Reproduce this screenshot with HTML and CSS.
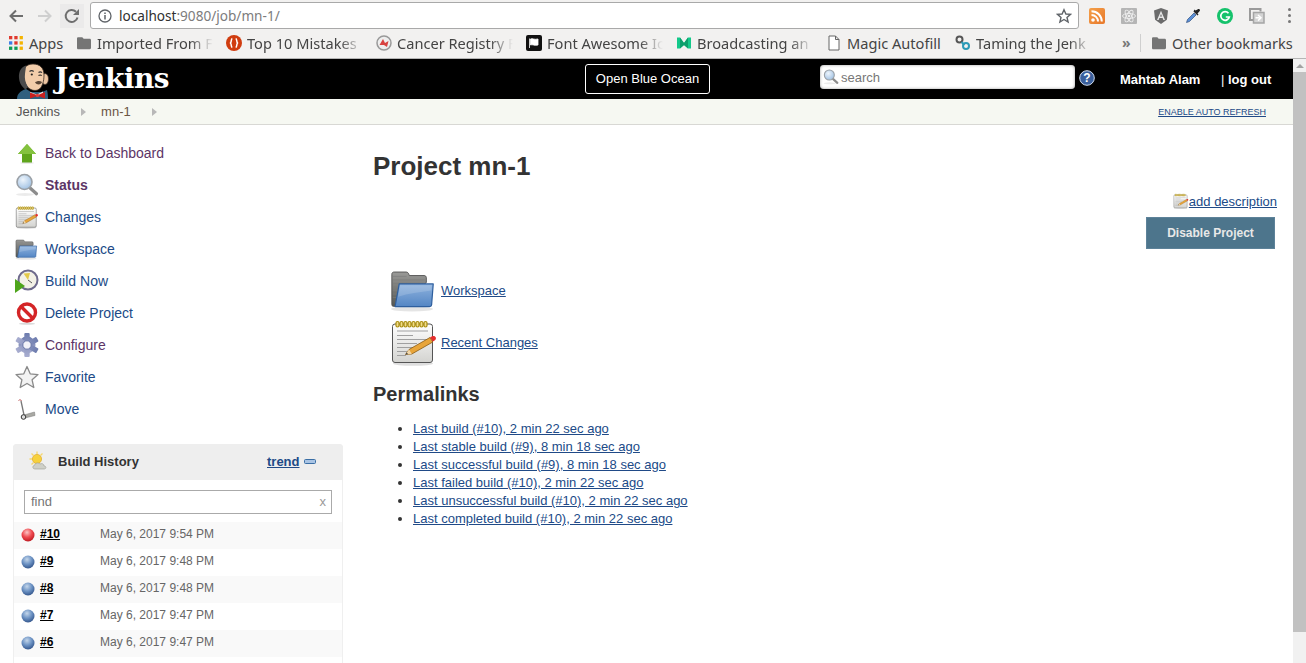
FILE: index.html
```html
<!DOCTYPE html>
<html lang="en">
<head>
<meta charset="utf-8">
<title>mn-1 [Jenkins]</title>
<link rel="stylesheet" href="styles.css">
</head>
<body>
<svg class="defs" width="0" height="0" aria-hidden="true">
  <defs>
    <linearGradient id="folderBlue" x1="0" y1="0" x2="0" y2="1"><stop offset="0" stop-color="#8fb3de"/><stop offset="1" stop-color="#5486c4"/></linearGradient>
    <linearGradient id="folderGrey" x1="0" y1="0" x2="0" y2="1"><stop offset="0" stop-color="#9a9a98"/><stop offset="1" stop-color="#555753"/></linearGradient>
    <linearGradient id="paper" x1="0" y1="0" x2="0" y2="1"><stop offset="0" stop-color="#fff"/><stop offset="1" stop-color="#d3d3d0"/></linearGradient>
    <linearGradient id="rssFill" x1="0" y1="0" x2="1" y2="1"><stop offset="0" stop-color="#f4a04a"/><stop offset="1" stop-color="#e8782a"/></linearGradient>
    <linearGradient id="gearFill" x1="0" y1="0" x2="0" y2="1"><stop offset="0" stop-color="#6d7cae"/><stop offset="1" stop-color="#a9aed0"/></linearGradient>
    <radialGradient id="ballBlue" cx=".42" cy=".3" r=".75"><stop offset="0" stop-color="#c4d6ea"/><stop offset=".5" stop-color="#6d93c4"/><stop offset="1" stop-color="#2d4f86"/></radialGradient>
    <radialGradient id="ballRed" cx=".42" cy=".3" r=".75"><stop offset="0" stop-color="#fbc5c5"/><stop offset=".5" stop-color="#ef4a50"/><stop offset="1" stop-color="#b8141c"/></radialGradient>
    <radialGradient id="glass" cx=".4" cy=".35" r=".7"><stop offset="0" stop-color="#eef5fc"/><stop offset="1" stop-color="#9dbfe2"/></radialGradient>
    <symbol id="i-folder" viewBox="0 0 48 48">
      <ellipse cx="22" cy="43" rx="21" ry="2.500" fill="#000" opacity=".1"/>
      <g transform="translate(0 2.500) scale(.92 .88)">
        <path d="M2 6.500C2 5 3 4 4.500 4h13c1.500 0 2.500 1 3 2.500l.5 1.500h16c1.500 0 2.500 1 2.500 2.500V16L8 43H3.500C2.500 43 2 42 2 41z" fill="url(#folderGrey)" stroke="#505050"/>
        <path d="M3 9h15M3 13h35M3 17h33M3 21h30M3 25h27M3 29h24M3 33h20" stroke="#7c7c7a" stroke-width=".7" fill="none"/>
        <path d="M10 17.500h37l-1.800 24c-.1 1.200-1 1.800-2.200 1.800H5.500z" fill="url(#folderBlue)" stroke="#2e5f9e" stroke-width="1.300" stroke-linejoin="round"/>
        <path d="M11 19h34.500l-.5 6C32 27 20 28 8.800 32z" fill="#fff" opacity=".16"/>
      </g>
    </symbol>
    <symbol id="i-notes" viewBox="0 0 48 48">
      <ellipse cx="23" cy="45.500" rx="20" ry="2.300" fill="#000" opacity=".13"/>
      <rect x="2.500" y="6" width="40" height="38.500" rx="2.500" fill="url(#paper)" stroke="#555"/>
      <g fill="#f0dc8a" stroke="#a98c0c" stroke-width="1.200"><rect x="6" y="3.500" width="3" height="5.500" rx="1.500"/><rect x="10" y="3.500" width="3" height="5.500" rx="1.500"/><rect x="14" y="3.500" width="3" height="5.500" rx="1.500"/><rect x="18" y="3.500" width="3" height="5.500" rx="1.500"/><rect x="22" y="3.500" width="3" height="5.500" rx="1.500"/><rect x="26" y="3.500" width="3" height="5.500" rx="1.500"/><rect x="30" y="3.500" width="3" height="5.500" rx="1.500"/><rect x="34" y="3.500" width="3" height="5.500" rx="1.500"/></g>
      <path d="M7 13h31M7 17.500h16M7 21.500h31M7 25.500h20M7 29.500h16M7 33.500h10M7 37.500h9" stroke="#a0a0a0" stroke-width="1" fill="none"/>
      <path d="M15.500 36.500l3.500-5 21-12 2.800 4.500-21 12z" fill="#e8a53a" stroke="#8a5a12" stroke-width=".8"/>
      <path d="M15.500 36.500l3.500-5 2.800 4.500z" fill="#f0d6a8"/>
      <path d="M15.500 36.500l1.300-1.900 1.200 1.700z" fill="#333"/>
      <path d="M40 19.500l2-1.200c1.800-.8 3.300-.2 3.800 1.300.4 1.500-.2 2.700-2 3.500l-1 .4z" fill="#e52f2f"/>
    </symbol>
    <symbol id="i-search" viewBox="0 0 24 24">
      <ellipse cx="10" cy="21.500" rx="9" ry="1.500" fill="#000" opacity=".08"/>
      <path d="M14.500 14.500l7 6.300" stroke="#8c8c8c" stroke-width="3.200" stroke-linecap="round"/>
      <circle cx="9.500" cy="9" r="7.500" fill="url(#glass)" stroke="#9aa0a6" stroke-width="1.600"/>
    </symbol>
  </defs>
</svg>

<header class="browser">
  <div class="toolbar">
    <svg class="nav" width="16" height="16" viewBox="0 0 16 16"><path d="M15 8H3M8 2.500L2.500 8 8 13.500" fill="none" stroke="#6e6e6e" stroke-width="2"/></svg>
    <svg class="nav" width="16" height="16" viewBox="0 0 16 16"><path d="M1 8h12M8 2.500L13.500 8 8 13.500" fill="none" stroke="#cfcfcf" stroke-width="2"/></svg>
    <span class="reload"><svg width="16" height="16" viewBox="0 0 16 16"><path d="M13.500 9.500A6 6 0 1 1 12 3.800" fill="none" stroke="#6e6e6e" stroke-width="2"/><path d="M15 1v6H9z" fill="#6e6e6e"/></svg></span>
    <div class="omnibox">
      <svg width="14" height="14" viewBox="0 0 14 14"><circle cx="7" cy="7" r="6" fill="none" stroke="#5f6368" stroke-width="1.300"/><path d="M7 6v4.500M7 3.500V5" stroke="#5f6368" stroke-width="1.500"/></svg>
      <span class="url"><span class="host">localhost</span>:9080/job/mn-1/</span>
      <svg class="star" width="16" height="16" viewBox="0 0 16 16"><path d="M8 1.700l1.900 4.300 4.600.4-3.500 3 1.100 4.600L8 11.500 3.900 14l1.100-4.600-3.500-3 4.600-.4z" fill="none" stroke="#5f6368" stroke-width="1.400"/></svg>
    </div>
    <div class="extensions">
      <svg width="16" height="16" viewBox="0 0 16 16"><rect width="16" height="16" rx="2" fill="url(#rssFill)"/><circle cx="4" cy="12" r="1.800" fill="#fff"/><path d="M2.500 7a6.500 6.500 0 0 1 6.500 6.500M2.500 3.200a10.300 10.300 0 0 1 10.300 10.300" fill="none" stroke="#fff" stroke-width="2"/></svg>
      <svg width="16" height="16" viewBox="0 0 16 16"><rect width="16" height="16" rx="1" fill="#b5b5b5"/><g fill="none" stroke="#eee" stroke-width=".9"><ellipse cx="8" cy="8" rx="6.500" ry="2.500"/><ellipse cx="8" cy="8" rx="6.500" ry="2.500" transform="rotate(60 8 8)"/><ellipse cx="8" cy="8" rx="6.500" ry="2.500" transform="rotate(120 8 8)"/></g><circle cx="8" cy="8" r="1.300" fill="#eee"/></svg>
      <svg width="16" height="16" viewBox="0 0 16 16"><path d="M8 0L1 2.500l1.100 9.300L8 16l5.900-4.200L15 2.500z" fill="#6b6b6b"/><path d="M8 2.700L4 12h1.600l.8-2h3.200l.8 2H12zM7 8.600l1-2.500 1 2.500z" fill="#e6e6e6"/></svg>
      <svg width="16" height="16" viewBox="0 0 16 16"><path d="M1.500 14.500l1-3L9 5l2 2-6.500 6.500z" fill="#5b8fd6" stroke="#33527f" stroke-width=".7"/><path d="M8.500 3.500l4 4 1-1-1-1 2-2.200c.7-.8.600-1.500 0-2s-1.300-.6-2 .1L10.500 2.500l-1-1z" fill="#222"/></svg>
      <svg width="16" height="16" viewBox="0 0 16 16"><circle cx="8" cy="8" r="8" fill="#15c26b"/><path d="M11.500 5.300A4.300 4.300 0 1 0 12.300 9H8.800" fill="none" stroke="#fff" stroke-width="1.700"/></svg>
      <svg width="16" height="16" viewBox="0 0 16 16"><path d="M11.500 3.500V1H1v11h3" fill="none" stroke="#9a9a9a" stroke-width="2"/><rect x="4.500" y="4.500" width="10.500" height="10.500" fill="#d4d4d4" stroke="#a5a5a5" stroke-width="1.500"/><path d="M6.500 9.800h4M9 7l3 2.800L9 12.600" fill="none" stroke="#fff" stroke-width="1.500"/></svg>
      <span class="dots"><i></i><i></i><i></i></span>
    </div>
  </div>
  <nav class="bookmarks">
    <a class="bm bm-apps"><svg width="14" height="14" viewBox="0 0 14 14"><g fill="#e0392e"><rect width="3.300" height="3.300"/><rect x="5.300" width="3.300" height="3.300"/></g><rect x="10.600" width="3.300" height="3.300" fill="#f4b400"/><rect y="5.300" width="3.300" height="3.300" fill="#3d7de6"/><rect x="5.300" y="5.300" width="3.300" height="3.300" fill="#e0392e"/><rect x="10.600" y="5.300" width="3.300" height="3.300" fill="#f4b400"/><rect y="10.600" width="3.300" height="3.300" fill="#0f9d58"/><rect x="5.300" y="10.600" width="3.300" height="3.300" fill="#0f9d58"/><rect x="10.600" y="10.600" width="3.300" height="3.300" fill="#f4b400"/></svg><span>Apps</span></a>
    <a class="bm bm-import"><svg width="14" height="14" viewBox="0 0 14 14"><path d="M0 2.500C0 1.700.6 1.200 1.300 1.200h4l1.400 1.600h6c.7 0 1.300.6 1.300 1.300v8c0 .7-.6 1.200-1.300 1.200H1.300C.6 13.300 0 12.800 0 12z" fill="#757575"/></svg><span class="fade">Imported From F</span></a>
    <a class="bm bm-std"><svg width="16" height="16" viewBox="0 0 16 16"><circle cx="8" cy="8" r="8" fill="#d03c0f"/><path d="M6.300 3.500C4.700 4 5.800 6.500 4.500 8c1.300 1.500.2 4 1.800 4.500M9.700 3.500c1.600.5.500 3 1.800 4.500-1.300 1.500-.2 4-1.800 4.500" fill="none" stroke="#fff" stroke-width="1.500"/></svg><span class="fade">Top 10 Mistakes</span></a>
    <a class="bm bm-std"><svg width="16" height="16" viewBox="0 0 16 16"><circle cx="8" cy="8" r="7" fill="#eee" stroke="#999" stroke-width="1.500"/><path d="M3.500 10L7 4l2 4 3.500-2-1.500 6-3-2z" fill="#d8413f"/></svg><span class="fade">Cancer Registry F</span></a>
    <a class="bm bm-std"><svg width="16" height="16" viewBox="0 0 16 16"><rect width="16" height="16" rx="2" fill="#111"/><path d="M3.500 3.500v9.500M4.500 4c2-1 3.500 1 7.500 0v6c-4 1-5.500-1-7.500 0z" fill="#fff" stroke="#fff" stroke-width=".8"/></svg><span class="fade">Font Awesome Ic</span></a>
    <a class="bm bm-std"><svg width="16" height="16" viewBox="0 0 16 16"><path d="M1 2.500h3L8 8l4-5.500h3v11h-3L8 10 4 13.500H1z" fill="#13c98a"/><path d="M4 2.500L8 8v2l-4 3.500zM12 2.500v11L8 10V8z" fill="#0b9e6b"/></svg><span class="fade">Broadcasting an</span></a>
    <a class="bm bm-doc"><svg width="12" height="16" viewBox="0 0 12 16"><path d="M1 1h6.500L11 4.500V15H1zM7.500 1v3.500H11" fill="#fff" stroke="#666"/></svg><span>Magic Autofill</span></a>
    <a class="bm bm-std bm-taming"><svg width="16" height="16" viewBox="0 0 16 16"><circle cx="4.500" cy="4.500" r="3" fill="none" stroke="#555" stroke-width="2"/><path d="M6.500 7l3 3" stroke="#2c9ab7" stroke-width="2"/><circle cx="11" cy="11" r="3" fill="none" stroke="#2c9ab7" stroke-width="2"/></svg><span class="fade">Taming the Jenk</span></a>
    <span class="more">»</span>
    <span class="sep"></span>
    <a class="bm bm-other"><svg width="14" height="14" viewBox="0 0 14 14"><path d="M0 2.500C0 1.700.6 1.200 1.300 1.200h4l1.400 1.600h6c.7 0 1.300.6 1.300 1.300v8c0 .7-.6 1.200-1.300 1.200H1.300C.6 13.300 0 12.800 0 12z" fill="#757575"/></svg><span>Other bookmarks</span></a>
  </nav>
</header>

<div class="viewport">
  <div class="page">
    <header class="jenkins-head">
      <a class="logo">
        <svg width="36" height="40" viewBox="0 0 36 40">
          <path d="M0 40c0-5 3-8 9-10l5 3h11l5-2c.8 3 1 6 1 9z" fill="#2f5f7e"/>
          <ellipse cx="28" cy="20" rx="3.500" ry="5.500" fill="#eec6a2" stroke="#3a2d25" stroke-width=".7"/>
          <path d="M6 16C5 9 10 5 16 5c7 0 11 4 11 11 0 6-1.500 11-4 13.500-2.500 2.500-7 2.500-10 .5C9 27.500 6.500 22 6 16z" fill="#f2cdaa" stroke="#3a2d25" stroke-width=".8"/>
          <path d="M9 6.500C4 8 1.500 13 2 19c.3 5 3 9 6.500 11.500L11 28C8 23 7.500 19 8 15c.3-3 1-6 1-8.500z" fill="#4b4b4b"/>
          <path d="M12.500 12.500c1.200-1 3-1 4.200 0M21.500 13.500c1-.8 2.500-.8 3.500.2" fill="none" stroke="#333" stroke-width="1.100"/>
          <circle cx="14.800" cy="15.500" r="1.100" fill="#222"/>
          <path d="M21.500 16.500c1-.6 2.200-.6 3.200 0" fill="none" stroke="#222" stroke-width="1.100"/>
          <path d="M18 23.500c1.800-1.700 5-2 7-.5-.8 2.800-5 3.400-7 .5z" fill="#5a4636"/>
          <path d="M13 33l7 2.500 6-3v2.500l-6 2-7-2z" fill="#e9e9e4"/>
          <path d="M13 33.500l7.500 2.800L28 33v6.500l-7.500-2.700-7.500 2.700z" fill="#c8201f"/>
          <circle cx="20.500" cy="36.400" r="1.700" fill="#e33b35"/>
        </svg>
        <span class="wordmark">Jenkins</span>
      </a>
      <a class="ocean">Open Blue Ocean</a>
      <div class="search"><svg width="16" height="16"><use href="#i-search"/></svg><span>search</span></div>
      <svg class="help" width="16" height="16" viewBox="0 0 16 16"><circle cx="8" cy="8" r="7.300" fill="#3a5f9c" stroke="#cfdcee" stroke-width="1"/><text x="8" y="12" text-anchor="middle" class="help-q">?</text></svg>
      <span class="user">Mahtab Alam</span>
      <span class="logout"><span class="pipe">|</span> log out</span>
    </header>
    <div class="crumbs">
      <a class="crumb">Jenkins</a><i class="arrow"></i>
      <a class="crumb crumb-job">mn-1</a><i class="arrow"></i>
      <a class="refresh">ENABLE AUTO REFRESH</a>
    </div>
    <div class="layout">
      <aside class="side">
        <ul class="tasks">
          <li><svg width="24" height="24" viewBox="0 0 24 24"><path d="M12 3L3 13h4v8.500h10V13h4z" fill="#5fa51c"/><path d="M12 3L3 13h18z" fill="#84c23e"/><ellipse cx="12" cy="22" rx="7" ry="1" fill="#000" opacity=".08"/></svg><a class="visited">Back to Dashboard</a></li>
          <li><svg width="24" height="24"><use href="#i-search"/></svg><a class="visited strong">Status</a></li>
          <li><svg width="24" height="24"><use href="#i-notes"/></svg><a>Changes</a></li>
          <li><svg width="24" height="24"><use href="#i-folder"/></svg><a>Workspace</a></li>
          <li><svg width="24" height="24" viewBox="0 0 24 24"><circle cx="13" cy="11" r="9.500" fill="#f3f1e6" stroke="#6e6a8c" stroke-width="2"/><path d="M13 11L8.500 4.500 15 4z" fill="#e3c94a"/><path d="M13 11l4 3" stroke="#555" stroke-width="1"/><path d="M0 10l10 7-10 7z" fill="#4ea51c"/></svg><a>Build Now</a></li>
          <li><svg width="24" height="24" viewBox="0 0 24 24"><circle cx="12" cy="11.500" r="8.500" fill="#fff" stroke="#d42527" stroke-width="3.400"/><path d="M6 5.500l12 12" stroke="#d42527" stroke-width="3.400"/><ellipse cx="12" cy="22.800" rx="8" ry="1" fill="#000" opacity=".15"/></svg><a>Delete Project</a></li>
          <li><svg width="24" height="24" viewBox="0 0 24 24"><g fill="url(#gearFill)"><circle cx="12" cy="12" r="8.500"/><rect x="9.300" y="0" width="5.400" height="24" rx="1"/><rect x="9.300" y="0" width="5.400" height="24" rx="1" transform="rotate(60 12 12)"/><rect x="9.300" y="0" width="5.400" height="24" rx="1" transform="rotate(120 12 12)"/></g><circle cx="12" cy="12" r="4.200" fill="#f2f2f8" stroke="#6b78a8"/></svg><a class="visited">Configure</a></li>
          <li><svg width="24" height="24" viewBox="0 0 24 24"><path d="M12 1.500l3.200 7.300 7.800.8-5.900 5.200 1.700 7.700L12 18.500l-6.800 4 1.700-7.700L1 9.600l7.800-.8z" fill="#f3f3f3" stroke="#8a8a8a" stroke-width="1.300" stroke-linejoin="round"/></svg><a>Favorite</a></li>
          <li><svg width="24" height="24" viewBox="0 0 24 24"><path d="M3.500 3.500c1-1 2.500-1 3 .5" fill="none" stroke="#c05a5a" stroke-width="1"/><path d="M6 4l3 14" stroke="#777" stroke-width="1.300"/><path d="M9 18l10.500-3 .5 3.500L10 21z" fill="#a9a9a4" stroke="#777" stroke-width=".5"/><circle cx="8.500" cy="20" r="2.300" fill="#ddd" stroke="#333"/></svg><a>Move</a></li>
        </ul>
        <section class="history">
          <div class="history-head">
            <svg width="20" height="20" viewBox="0 0 20 20"><g stroke="#f5d76e" stroke-width="1.300"><path d="M8 .5v3M.5 8h3M2.500 2.500l2 2M13.500 2.500l-2 2M2.500 13.500l2-2"/></g><circle cx="8" cy="8" r="4.600" fill="#f7d13c" stroke="#e3a92a" stroke-width=".7"/><path d="M6 18c-2.500 0-3-3.200-.5-3.700C6 12 9 11 11 13c2-1 4 0 4 2 2.500 0 2.500 3 0 3z" fill="#cfd0c8" stroke="#9a9a92" stroke-width=".6"/></svg>
            <span class="history-title">Build History</span>
            <a class="trend">trend</a>
            <svg class="collapse" width="12" height="5" viewBox="0 0 12 5"><rect x=".5" y=".5" width="11" height="4" rx="1" fill="#a9c4e4" stroke="#3a6ea5"/></svg>
          </div>
          <div class="find"><span>find</span><span class="clear">x</span></div>
          <ul class="builds">
            <li><svg width="14" height="14" viewBox="0 0 14 14"><circle cx="7" cy="7" r="6.500" fill="url(#ballRed)"/></svg><a>#10</a><span>May 6, 2017 9:54 PM</span></li>
            <li><svg width="14" height="14" viewBox="0 0 14 14"><circle cx="7" cy="7" r="6.500" fill="url(#ballBlue)"/></svg><a>#9</a><span>May 6, 2017 9:48 PM</span></li>
            <li><svg width="14" height="14" viewBox="0 0 14 14"><circle cx="7" cy="7" r="6.500" fill="url(#ballBlue)"/></svg><a>#8</a><span>May 6, 2017 9:48 PM</span></li>
            <li><svg width="14" height="14" viewBox="0 0 14 14"><circle cx="7" cy="7" r="6.500" fill="url(#ballBlue)"/></svg><a>#7</a><span>May 6, 2017 9:47 PM</span></li>
            <li><svg width="14" height="14" viewBox="0 0 14 14"><circle cx="7" cy="7" r="6.500" fill="url(#ballBlue)"/></svg><a>#6</a><span>May 6, 2017 9:47 PM</span></li>
          </ul>
        </section>
      </aside>
      <main class="main">
        <h1>Project mn-1</h1>
        <div class="desc"><svg width="16" height="16"><use href="#i-notes"/></svg><a>add description</a></div>
        <div class="actions"><button class="disable" type="button">Disable Project</button></div>
        <div class="links">
          <div class="link-row"><svg width="48" height="48"><use href="#i-folder"/></svg><a>Workspace</a></div>
          <div class="link-row"><svg width="48" height="48"><use href="#i-notes"/></svg><a>Recent Changes</a></div>
        </div>
        <h2>Permalinks</h2>
        <ul class="permalinks">
          <li><a>Last build (#10), 2 min 22 sec ago</a></li>
          <li><a>Last stable build (#9), 8 min 18 sec ago</a></li>
          <li><a>Last successful build (#9), 8 min 18 sec ago</a></li>
          <li><a>Last failed build (#10), 2 min 22 sec ago</a></li>
          <li><a>Last unsuccessful build (#10), 2 min 22 sec ago</a></li>
          <li><a>Last completed build (#10), 2 min 22 sec ago</a></li>
        </ul>
      </main>
    </div>
  </div>
  <div class="scrollbar"><span class="scroll-up"></span><span class="scroll-thumb"></span></div>
</div>
</body>
</html>
```
FILE: styles.css
```css
* { box-sizing: border-box; }
html, body { margin: 0; height: 663px; overflow: hidden; background: #fff; }
body { font-family: "Liberation Sans", Arial, sans-serif; font-size: 13px; color: #333; display: flex; flex-direction: column; }
ul { list-style: none; margin: 0; padding: 0; }
a { color: #204a87; }
svg { display: block; flex: none; }
.defs { position: absolute; }

/* browser chrome */
.browser { height: 59px; flex: none; background: #f2f1f0; border-bottom: 1px solid #b5b5b5; font-family: "Noto Sans", sans-serif; }
.toolbar { height: 30px; display: flex; align-items: center; padding: 1px 0 0 8px; }
.nav { margin-right: 13px; }
.reload { width: 24px; height: 24px; margin-left: -6px; display: flex; align-items: center; justify-content: center; background: #ebeaea; }
.omnibox { width: 989px; height: 27px; margin-left: 6px; background: #fff; border: 1px solid #a9a9a9; border-radius: 3px; display: flex; align-items: center; padding: 0 6px 0 7px; }
.url { margin-left: 7px; font-size: 13.6px; color: #7c7c7c; flex: 1; }
.host { color: #2f2f2f; }
.extensions { display: flex; align-items: center; gap: 16px; margin-left: 10px; }
.dots { display: flex; flex-direction: column; gap: 3px; margin-left: 7px; }
.dots i { width: 3px; height: 3px; border-radius: 50%; background: #777; }
.bookmarks { height: 28px; display: flex; align-items: center; padding: 0 0 2px 9px; font-size: 14.6px; color: #4a4a4a; white-space: nowrap; }
.bm { display: flex; align-items: center; gap: 6px; color: #444; }
.bm span { display: block; }
.fade { width: 116px; overflow: hidden; -webkit-mask-image: linear-gradient(90deg, #000 80%, transparent); mask-image: linear-gradient(90deg, #000 80%, transparent); }
.bm-apps { width: 68px; }
.bm-import { width: 136px; }
.bm-std { width: 137px; margin-left: 13px; gap: 5px; }
.bm-doc { width: 127px; margin-left: 15px; gap: 7px; }
.bm-taming { margin-left: 0; }
.more { margin-left: 30px; width: 8px; color: #777; font-size: 14px; font-weight: 700; line-height: 14px; }
.sep { width: 1px; height: 18px; background: #cfcfcf; margin-left: 10px; }
.bm-other { margin-left: 11px; }

/* page */
.viewport { flex: 1; min-height: 0; display: flex; }
.page { flex: 1; min-width: 0; overflow: hidden; display: flex; flex-direction: column; }
.scrollbar { width: 13px; flex: none; background: #f1f1f1; display: flex; flex-direction: column; align-items: center; }
.scroll-up { margin: 5px 0 4px; width: 0; height: 0; border: 4px solid transparent; border-top: 0; border-bottom: 4px solid #a3a3a3; }
.scroll-thumb { width: 13px; height: 560px; background: #c1c1c1; }

.jenkins-head { height: 40px; flex: none; background: #000; color: #fff; display: flex; align-items: center; padding-left: 17px; }
.logo { display: flex; align-items: flex-end; height: 40px; width: 568px; }
.wordmark { font: 700 28px/36px "DejaVu Serif", "Liberation Serif", serif; color: #fff; margin-left: 2px; letter-spacing: -.5px; align-self: center; }
.ocean { width: 125px; height: 30px; border: 1px solid #fff; border-radius: 3px; color: #fff; text-align: center; line-height: 27px; font-size: 13px; }
.search { width: 255px; height: 24px; margin: 0 0 4px 110px; background: #fff; border-radius: 4px; box-shadow: inset 0 0 3px #999; display: flex; align-items: center; padding-left: 3px; color: #777; font-size: 13px; }
.search span { margin-left: 2px; }
.help { margin: 0 0 2px 4px; }
.help-q { font: 700 12px "Liberation Sans", sans-serif; fill: #fff; }
.user { margin-left: 25px; font-weight: 700; font-size: 13px; width: 101px; }
.logout { font-weight: 700; font-size: 13px; }
.pipe { font-weight: 400; }

.crumbs { height: 26px; flex: none; background: #f6f8f2; border-bottom: 1px solid #d8d8d4; display: flex; align-items: center; padding: 0 27px 0 16px; font-size: 13px; color: #555; }
.crumb { color: #555; }
.crumb-job { color: #6b5544; }
.arrow { width: 0; height: 0; border: 4px solid transparent; border-left: 5px solid #b8b8b8; border-right: 0; margin: 0 15px 0 21px; }
.refresh { margin-left: auto; font-size: 9px; color: #204a87; text-decoration: underline; }

.layout { flex: 1; min-height: 0; display: flex; }
.side { width: 343px; flex: none; padding: 12px 0 0 13px; }
.tasks { height: 307px; }
.tasks li { height: 32px; display: flex; align-items: center; padding-left: 2px; font-size: 14px; }
.tasks li a { margin-left: 6px; }
.visited { color: #5c3566 !important; }
.strong { font-weight: 700; }

.history { border: 1px solid #efefef; border-bottom: 0; border-radius: 4px 4px 0 0; height: 260px; }
.history-head { height: 36px; background: #eee; border-radius: 4px 4px 0 0; margin: -1px -1px 0; display: flex; align-items: center; padding: 0 0 2px 16px; font-size: 13px; }
.history-title { font-weight: 700; margin-left: 9px; color: #333; width: 209px; }
.trend { font-weight: 700; text-decoration: underline; }
.collapse { margin-left: 4px; }
.find { height: 24px; margin: 10px 10px 8px; border: 1px solid #aaa; display: flex; justify-content: space-between; align-items: center; padding: 0 5px 2px 6px; color: #757575; font-size: 13px; }
.clear { color: #999; }
.builds li { height: 27px; display: flex; align-items: center; padding: 0 0 3px 7px; font-size: 12px; color: #666; }
.builds li svg { margin: 2px 0 0; }
.builds li:nth-child(odd) { background: #f9f9f9; }
.builds a { color: #000; font-weight: 700; text-decoration: underline; margin-left: 5px; width: 60px; }

.main { flex: 1; min-width: 0; padding: 0 16px 0 30px; }
h1 { margin: 27px 0 0; font-size: 26px; line-height: 28px; color: #333; }
.desc { display: flex; justify-content: flex-end; align-items: center; margin-top: 13px; height: 16px; }
.main a { text-decoration: underline; }
.actions { display: flex; justify-content: flex-end; margin: 8px 2px 0 0; }
.disable { width: 129px; height: 32px; background: #4d758c; border: 1px solid #5d8299; color: #e8e8e8; font: 700 12px "Liberation Sans", sans-serif; }
.links { margin: 15px 0 0 17px; }
.link-row { display: flex; align-items: center; height: 52px; gap: 3px; }
h2 { margin: 14px 0 0; font-size: 20px; line-height: 24px; color: #333; }
.permalinks { list-style: disc; margin: 14px 0 0; padding-left: 40px; line-height: 18px; }
```
